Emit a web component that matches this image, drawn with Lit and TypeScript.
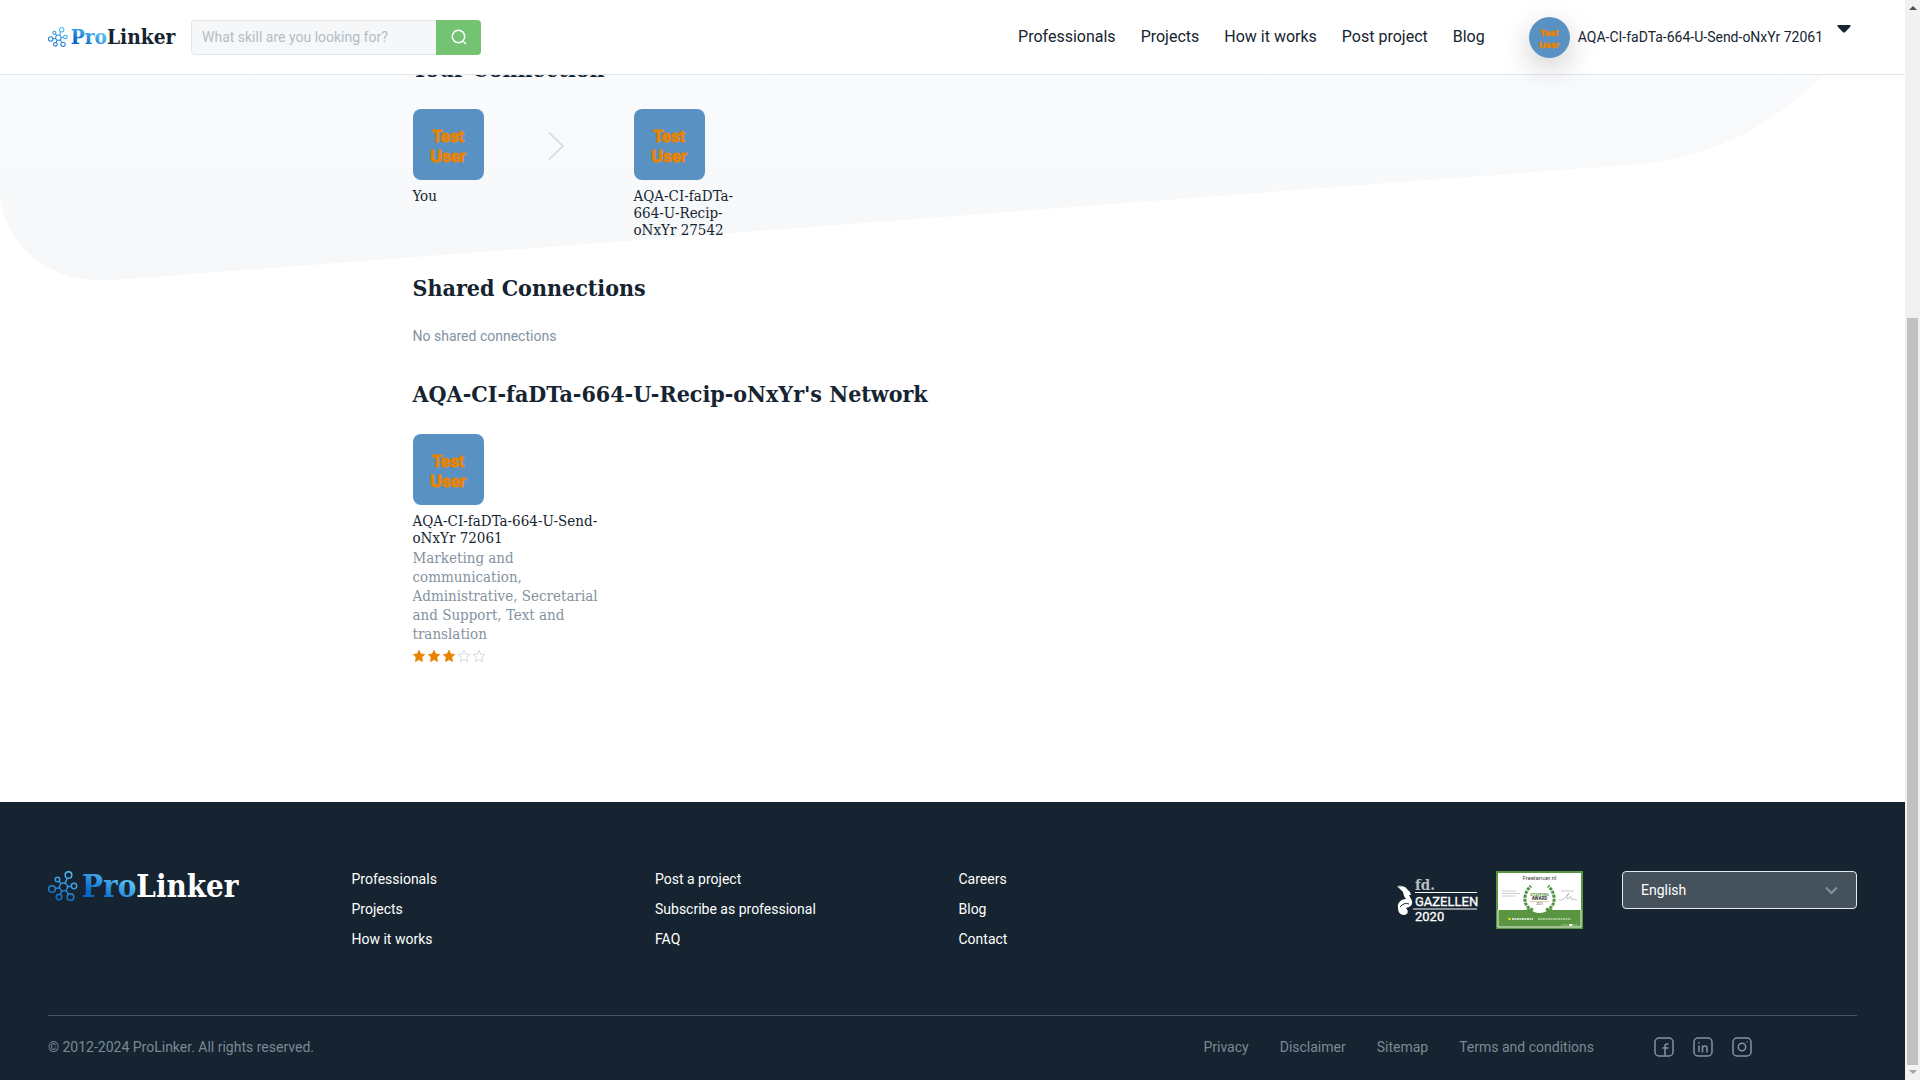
import { LitElement, html, css, svg } from "lit";
import { customElement, property } from "lit/decorators.js";

const SLAB = css`"Roboto Slab", "DejaVu Serif Condensed", "DejaVu Serif", serif`;

@customElement("pl-logo")
class PlLogo extends LitElement {
  @property({ type: Boolean, reflect: true }) footer = false;

  static styles = css`
    :host {
      display: block;
      width: 127px;
      color: #152430;
    }
    :host([footer]) {
      width: 190px;
      color: #fff;
    }
    svg {
      display: block;
      width: 100%;
      overflow: visible;
    }
    .word {
      font-family: ${SLAB};
      font-weight: 700;
      font-size: 31px;
    }
  `;

  render() {
    return html`<svg viewBox="0 0 190 30" role="img" aria-label="ProLinker">
      <defs>
        <linearGradient id="g" gradientUnits="userSpaceOnUse" x1="68" y1="2" x2="54" y2="30">
          <stop offset="0.1" stop-color="#58bdf5" />
          <stop offset="0.9" stop-color="#0568c8" />
        </linearGradient>
        <linearGradient id="m" gradientUnits="userSpaceOnUse" x1="22" y1="0" x2="8" y2="30">
          <stop offset="0" stop-color="#58bdf5" />
          <stop offset="1" stop-color="#0568c8" />
        </linearGradient>
      </defs>
      <g fill="none" stroke="url(#m)" stroke-width="1.500">
        <circle cx="15.500" cy="16" r="4" />
        <circle cx="20.500" cy="4" r="3.300" />
        <circle cx="9.500" cy="8.500" r="2.300" />
        <circle cx="4" cy="18" r="3.300" />
        <circle cx="11" cy="26" r="2.800" />
        <circle cx="22.500" cy="26" r="3.300" />
        <circle cx="26" cy="15" r="2.700" />
        <path d="M17 12.300 19.300 7.200M13.300 12.700 11 10.300M11.600 16.700 7.300 17.500M13.800 19.600 12.300 23.500M18 19.200 20.400 23.300M19.500 15.700 23.300 15.300" />
      </g>
      <text class="word" y="26" x="34" fill="url(#g)">Pro<tspan fill="currentColor">Linker</tspan></text>
    </svg>`;
  }
}

@customElement("pl-avatar")
class PlAvatar extends LitElement {
  static styles = css`
    :host {
      display: block;
      width: 71px;
      border-radius: 8px;
      overflow: hidden;
    }
    svg {
      display: block;
      width: 100%;
    }
    text {
      font-family: "Liberation Sans", sans-serif;
      font-weight: 700;
      font-size: 16px;
      text-anchor: middle;
      fill: #e88300;
      stroke: #e88300;
      stroke-width: 1px;
    }
  `;

  render() {
    return html`<svg viewBox="0 0 71 71" role="img" aria-label="Test User">
      <rect width="71" height="71" fill="#5a91c3" />
      <text x="35" y="33">Test</text>
      <text x="35" y="53">User</text>
    </svg>`;
  }
}

const STAR = "M6 0.300 7.700 4 11.700 4.500 8.800 7.300 9.500 11.500 6 9.500 2.500 11.500 3.200 7.300 0.300 4.500 4.300 4Z";

@customElement("app-root")
class AppRoot extends LitElement {
  static styles = css`
    :host {
      display: grid;
      grid-template-columns: minmax(0, 1fr) 15px;
      min-height: 100vh;
      font: 14px/20px Roboto, "Liberation Sans", sans-serif;
      color: #152430;
      background: #fff;
    }
    * {
      box-sizing: border-box;
    }
    a {
      color: inherit;
      text-decoration: none;
    }
    h2,
    p,
    ul {
      margin: 0;
      padding: 0;
      list-style: none;
    }
    .page {
      position: relative;
      display: flex;
      flex-direction: column;
    }
    .shape {
      position: absolute;
      top: 0;
      left: 0;
      width: 100%;
      height: 282px;
    }

    /* Header */
    .header {
      position: absolute;
      z-index: 2;
      top: 0;
      left: 0;
      right: 0;
      display: flex;
      align-items: center;
      height: 75px;
      padding: 0 54px 0 48px;
      background: #fff;
      border-bottom: 1px solid #e1e6eb;
    }
    .search {
      display: flex;
      width: 290px;
      height: 35px;
      margin-left: 16px;
    }
    .search input {
      flex: 1;
      min-width: 0;
      padding: 0 10px;
      font: inherit;
      color: #152430;
      background: #f5f7f9;
      border: 1px solid #dfe6ec;
      border-right: 0;
      border-radius: 4px 0 0 4px;
      outline: none;
    }
    .search input::placeholder {
      color: #b4bcc5;
      opacity: 1;
    }
    .search button {
      display: grid;
      place-items: center;
      width: 45px;
      padding: 0;
      border: 0;
      border-radius: 0 4px 4px 0;
      background: #73c373;
    }
    .nav {
      display: flex;
      gap: 25px;
      margin-left: auto;
      font-size: 16px;
    }
    .user {
      display: flex;
      align-items: center;
      gap: 8px;
      margin-left: 44px;
      padding: 0;
      border: 0;
      background: none;
      font: inherit;
      color: inherit;
    }
    .user pl-avatar {
      width: 41px;
      border-radius: 50%;
      box-shadow: 0 10px 30px rgba(0, 0, 0, 0.2);
    }
    .caret {
      width: 14px;
      height: 8px;
      margin: 0 0 16px 6px;
    }

    /* Content */
    .main {
      position: relative;
      flex: 1;
      width: 100%;
      max-width: 1080px;
      margin: 0 auto;
      padding: 52px 0 130px;
    }
    h2 {
      font: 700 23px/34px ${SLAB};
      margin-bottom: 23px;
    }
    .path {
      display: grid;
      grid-template-columns: 135px 86px 103px;
      margin-bottom: 32px;
    }
    .chevron {
      display: block;
      width: 16px;
      height: 30px;
      margin-top: 22px;
    }
    .name {
      margin-top: 8px;
      font: 15px/17px ${SLAB};
    }
    .empty {
      margin: -2px 0 31px;
      color: #8492a0;
    }
    .card {
      width: 190px;
    }
    .skills {
      margin-top: 2px;
      font: 15px/19px ${SLAB};
      color: #8492a0;
    }
    .stars {
      display: flex;
      gap: 3px;
      margin-top: 6px;
    }
    .stars svg {
      width: 12px;
      height: 12px;
    }

    /* Footer */
    .footer {
      padding: 67px 48px 23px;
      color: #fff;
      background: #152430;
    }
    .top {
      display: grid;
      grid-template-columns: repeat(6, 1fr);
      gap: 12px;
      min-height: 146px;
    }
    .top pl-logo {
      margin-top: 2px;
    }
    .links {
      display: flex;
      flex-direction: column;
      gap: 10px;
    }
    .extras {
      grid-column: span 2;
      display: flex;
      align-items: flex-start;
      justify-content: flex-end;
      padding-top: 2px;
    }
    .gazellen {
      width: 80px;
      height: 44px;
      margin: 7px 19px 0 0;
      overflow: visible;
    }
    .award {
      width: 87px;
      height: 58px;
      margin-right: 39px;
    }
    .language {
      position: relative;
      width: 235px;
    }
    .language select {
      display: block;
      width: 100%;
      height: 38px;
      padding: 0 18px;
      appearance: none;
      font: inherit;
      color: #fff;
      background: #45515b;
      border: 1px solid #e4e8ec;
      border-radius: 4px;
    }
    .language svg {
      position: absolute;
      top: 15px;
      right: 19px;
      pointer-events: none;
    }
    .bottom {
      display: flex;
      align-items: center;
      border-top: 1px solid #445366;
      padding: 21px 105px 0 0;
      color: #7b8995;
    }
    .legal {
      display: flex;
      gap: 31px;
      margin-left: auto;
    }
    .social {
      display: flex;
      gap: 19px;
      margin-left: 60px;
    }
    .social svg {
      display: block;
    }

    /* Scroll track */
    .track {
      display: flex;
      flex-direction: column;
      align-items: center;
      padding: 6px 0;
      background: #f1f1f1;
    }
    .thumb {
      flex: 1;
      width: 11px;
      margin: 308px 0 5px;
      background: #c1c1c1;
    }
  `;

  private links(items: string[]) {
    return html`<ul class="links">
      ${items.map((t) => html`<li><a href="#">${t}</a></li>`)}
    </ul>`;
  }

  private social(label: string, glyph: unknown) {
    return html`<a href="#" aria-label=${label}>
      <svg width="20" height="20" viewBox="0 0 20 20" fill="none" stroke="#8492a0" stroke-width="1.500">
        <rect x="1" y="1" width="18" height="18" rx="4" />
        ${glyph}
      </svg>
    </a>`;
  }

  render() {
    return html`
      <div class="page">
        <svg class="shape" viewBox="0 0 1905 282" preserveAspectRatio="none" aria-hidden="true">
          <defs>
            <linearGradient id="bg" x1="0" y1="0" x2="0" y2="1">
              <stop offset="0.2" stop-color="#fafbfc" />
              <stop offset="1" stop-color="#f5f7f9" />
            </linearGradient>
          </defs>
          <path fill="url(#bg)" d="M0 0H1870Q1850 50 1824 75C1772 126 1710 158 1640 164L112 280C50 285 0 244 0 188Z" />
        </svg>

        <header class="header">
          <a href="#" aria-label="ProLinker home"><pl-logo></pl-logo></a>
          <form class="search" role="search">
            <input type="text" aria-label="Search skills" placeholder="What skill are you looking for?" />
            <button type="button" aria-label="Search">
              <svg width="16" height="16" viewBox="0 0 16 16" fill="none" stroke="#fff" stroke-width="1.500">
                <circle cx="7.500" cy="7.500" r="6.200" />
                <path d="M12 12 15 15" />
              </svg>
            </button>
          </form>
          <nav class="nav">
            ${["Professionals", "Projects", "How it works", "Post project", "Blog"].map(
              (t) => html`<a href="#">${t}</a>`,
            )}
          </nav>
          <button class="user" type="button">
            <pl-avatar></pl-avatar>
            <span>AQA-CI-faDTa-664-U-Send-oNxYr 72061</span>
            <svg class="caret" viewBox="0 0 14 8" fill="#152430">
              <path d="M1 0H13Q14.200 .8 13 2L8 7.200Q7 8 6 7.200L1 2Q-.2 .8 1 0Z" />
            </svg>
          </button>
        </header>

        <main class="main">
          <h2>Your Connection</h2>
          <div class="path">
            <div>
              <pl-avatar></pl-avatar>
              <p class="name">You</p>
            </div>
            <svg class="chevron" viewBox="0 0 16 30" fill="none" stroke="#d9dde2" stroke-width="1.800">
              <path d="M1 1.500 15 15 1 28.500" />
            </svg>
            <div>
              <pl-avatar></pl-avatar>
              <p class="name">AQA-CI-faDTa-664-U-Recip-oNxYr 27542</p>
            </div>
          </div>

          <h2>Shared Connections</h2>
          <p class="empty">No shared connections</p>

          <h2>AQA-CI-faDTa-664-U-Recip-oNxYr's Network</h2>
          <article class="card">
            <pl-avatar></pl-avatar>
            <p class="name">AQA-CI-faDTa-664-U-Send-oNxYr 72061</p>
            <p class="skills">
              Marketing and communication, Administrative, Secretarial and Support, Text and translation
            </p>
            <div class="stars" role="img" aria-label="3 out of 5">
              ${[1, 1, 1, 0, 0].map(
                (on) => html`<svg viewBox="0 0 12 12">
                  <path d=${STAR} fill=${on ? "#e88300" : "none"} stroke=${on ? "#e88300" : "#c9cfd6"} stroke-width="0.800" />
                </svg>`,
              )}
            </div>
          </article>
        </main>

        <footer class="footer">
          <div class="top">
            <pl-logo footer></pl-logo>
            ${this.links(["Professionals", "Projects", "How it works"])}
            ${this.links(["Post a project", "Subscribe as professional", "FAQ"])}
            ${this.links(["Careers", "Blog", "Contact"])}
            <div class="extras">
              <svg class="gazellen" viewBox="0 0 80 44" role="img" aria-label="fd. Gazellen 2020">
                <g fill="#fff">
                  <path d="M0 8 5 9 1 7 8 9 10 11 13 14 14 17 12 17 15 23C16 28 12 29 9 30 12 33 11 37 7 37 3 37 1 34 1 30 0 24 5 21 9 21L7 18 6 14Z" />
                  <path d="M18 14.500H80M16 31H80" stroke="#fff" stroke-width="1.200" />
                  <g font-family="Liberation Sans Narrow, Roboto" stroke="#fff" stroke-width="0.300">
                    <text x="18" y="28" font-size="13">GAZELLEN</text>
                    <text x="18" y="43" font-size="13">2020</text>
                  </g>
                </g>
                <path d="M3 29Q7 24 12 26" fill="none" stroke="#152430" />
                <text x="18" y="12" font-family="DejaVu Serif Condensed, DejaVu Serif" font-weight="700" font-size="15" fill="#b9bec2">fd.</text>
              </svg>
              <svg class="award" viewBox="0 0 87 58" role="img" aria-label="Freelancer.nl Staffing Award">
                <rect width="87" height="58" fill="#5a9641" />
                <path d="M2 2H85V39H2Z" fill="#fff" />
                <path d="M2 39V56H85V39" fill="none" stroke="#e6efe2" />
                <path d="M30 39 35 36H52L57 39 50 42H37Z" fill="#5a9641" />
                <circle cx="43.500" cy="28" r="14" fill="#fff" />
                <path d="M37 39Q28 36 29 26 30 19 35 15M50 39Q59 36 58 26 57 19 52 15" fill="none" stroke="#4f9140" stroke-width="3" stroke-dasharray="3 1" />
                <g font-family="Roboto" text-anchor="middle">
                  <text x="43.500" y="9" font-size="6" fill="#444">Freelancer.nl</text>
                  <text x="43.500" y="25" font-size="4" font-weight="700" fill="#5a9641">STAFFING</text>
                  <text x="43.500" y="29" font-size="4.500" font-weight="700" fill="#333">AWARD</text>
                  <text x="43.500" y="34" font-size="3" fill="#333">2021</text>
                </g>
                <path d="M34 30.500H53" stroke="#d7b65a" stroke-width="0.600" />
                <path d="M6 20H20M6 22.500H24M6 25H19M65 20H78" stroke="#aaa" stroke-width="0.600" />
                <path d="M63 29Q68 30 73 22 69 27 72 28 76 23 75 28L81 29" fill="none" stroke="#999" stroke-width="0.600" />
                <circle cx="13.500" cy="48" r="1.200" fill="#f4e532" />
                <path d="M16 48H37" stroke="#eff7ec" stroke-width="1.500" stroke-dasharray="2 .5" />
                <path d="M42 48H75" stroke="#b9d6ae" stroke-width="1.300" stroke-dasharray="2 .5" />
                <path d="M65 54H72M77 54H82" stroke="#a6c99a" stroke-width="0.800" />
                <path d="M73 54H76.500" stroke="#fff" stroke-width="2" />
              </svg>
              <div class="language">
                <select aria-label="Language">
                  <option>English</option>
                </select>
                <svg width="13" height="9" viewBox="0 0 13 9" fill="none" stroke="#8492a0" stroke-width="2">
                  <path d="M1 1.500 6.500 7 12 1.500" />
                </svg>
              </div>
            </div>
          </div>
          <div class="bottom">
            <span>© 2012-2024 ProLinker. All rights reserved.</span>
            <nav class="legal">
              ${["Privacy", "Disclaimer", "Sitemap", "Terms and conditions"].map((t) => html`<a href="#">${t}</a>`)}
            </nav>
            <div class="social">
              ${this.social("Facebook", svg`<path d="M11 18.500V9Q11 6.500 14.500 7M8.500 11H14.500" />`)}
              ${this.social("LinkedIn", svg`<path d="M6 8.500V15M6 5V6.500M9.500 15.500V8.500M9.500 11Q10 9 12 9 14 9 14 11V15.500" />`)}
              ${this.social("Instagram", svg`<circle cx="10" cy="10" r="3.700" /><path d="M14.500 5H15.500" />`)}
            </div>
          </div>
        </footer>
      </div>

      <div class="track" aria-hidden="true">
        <svg width="8" height="4" viewBox="0 0 8 4"><path d="M0 4 4 0 8 4Z" fill="#505050" /></svg>
        <div class="thumb"></div>
        <svg width="8" height="4" viewBox="0 0 8 4"><path d="M0 0H8L4 4Z" fill="#a3a3a3" /></svg>
      </div>
    `;
  }
}
